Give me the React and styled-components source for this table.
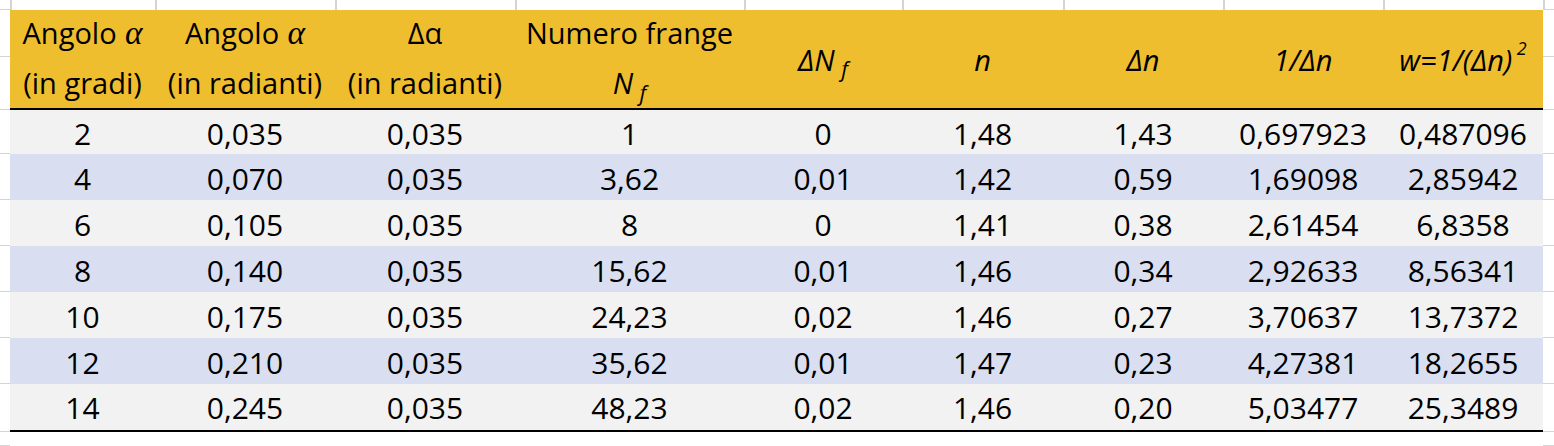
import React from "react";
import styled, { createGlobalStyle, css } from "styled-components";

const GlobalStyle = createGlobalStyle`
  html, body {
    margin: 0;
    padding: 0;
    background: #ffffff;
  }
  body {
    font-family: "Open Sans", "Noto Sans", sans-serif;
    color: #000;
  }
`;

const GRID = "#d4d4d4";
const YELLOW = "#efbe2e";

// every sheet cell sits on an explicit row / column of the sheet grid
const at = css`
  grid-row: ${(p) => p.$row} / span ${(p) => p.$rows || 1};
  grid-column: ${(p) => p.$col} / span ${(p) => p.$cols || 1};
  box-sizing: border-box;
  min-width: 0;
`;

const Sheet = styled.div`
  display: grid;
  grid-template-columns: 10px 145px 180px 180px 229px 158px 161px 160px 160px 160px 1fr;
  grid-template-rows: 10px 47px 53px 44px repeat(5, 46px) 48px 1fr;
  width: 1554px;
  height: 446px;
  overflow: hidden;
  background: #fff;
`;

// empty spreadsheet cells around the table, only gridlines
const EdgeCell = styled.div`
  ${at}
  border-left: ${(p) => (p.$left ? `2px solid ${GRID}` : "none")};
  border-bottom: ${(p) => (p.$under ? `1px solid ${GRID}` : "none")};
`;

const Head = styled.div`
  ${at}
  background: ${YELLOW};
  display: flex;
  align-items: center;
  justify-content: center;
  font-size: 29px;
  font-style: ${(p) => (p.$italic ? "italic" : "normal")};
  white-space: nowrap;
  border-bottom: ${(p) => (p.$last ? "2px solid #000" : "none")};
  padding-bottom: ${(p) => (p.$last ? "0" : "2px")};
`;

const Alpha = styled.span`
  font-family: "Liberation Serif", "DejaVu Serif", serif;
  font-style: italic;
  font-size: 1.15em;
  margin-left: 0.25em;
`;

const Sub = styled.span`
  font-size: 0.74em;
  font-style: italic;
  position: relative;
  top: 0.45em;
  margin-left: 0.3em;
`;

const Sup = styled.span`
  font-size: 0.62em;
  font-style: italic;
  position: relative;
  top: -0.6em;
  margin-left: 0.25em;
`;

const Cell = styled.div`
  ${at}
  background: ${(p) => (p.$alt ? "#d9dff1" : "#f2f2f2")};
  display: flex;
  align-items: center;
  justify-content: center;
  font-size: 30px;
  white-space: nowrap;
  border-bottom: ${(p) => (p.$last ? "2px solid #000" : "none")};
  padding-top: ${(p) => (p.$last ? "0" : "2px")};
`;

const rows = [
  ["2", "0,035", "0,035", "1", "0", "1,48", "1,43", "0,697923", "0,487096"],
  ["4", "0,070", "0,035", "3,62", "0,01", "1,42", "0,59", "1,69098", "2,85942"],
  ["6", "0,105", "0,035", "8", "0", "1,41", "0,38", "2,61454", "6,8358"],
  ["8", "0,140", "0,035", "15,62", "0,01", "1,46", "0,34", "2,92633", "8,56341"],
  ["10", "0,175", "0,035", "24,23", "0,02", "1,46", "0,27", "3,70637", "13,7372"],
  ["12", "0,210", "0,035", "35,62", "0,01", "1,47", "0,23", "4,27381", "18,2655"],
  ["14", "0,245", "0,035", "48,23", "0,02", "1,46", "0,20", "5,03477", "25,3489"],
];

const cols = [2, 3, 4, 5, 6, 7, 8, 9, 10, 11];

export default function App() {
  return (
    <>
      <GlobalStyle />
      <Sheet>
        {/* top strip */}
        <EdgeCell $row={1} $col={1} $under />
        {cols.map((c) => (
          <EdgeCell key={"t" + c} $row={1} $col={c} $left $under={c === 11} />
        ))}

        {/* side gridlines, header rows + data rows */}
        {[2, 3, 4, 5, 6, 7, 8, 9, 10, 11].map((r) => (
          <React.Fragment key={"g" + r}>
            <EdgeCell $row={r} $col={1} $under />
            <EdgeCell $row={r} $col={11} $under />
          </React.Fragment>
        ))}

        {/* header */}
        <Head $row={2} $col={2}>
          Angolo<Alpha>α</Alpha>
        </Head>
        <Head $row={3} $col={2} $last>(in gradi)</Head>
        <Head $row={2} $col={3}>
          Angolo<Alpha>α</Alpha>
        </Head>
        <Head $row={3} $col={3} $last>(in radianti)</Head>
        <Head $row={2} $col={4}>Δα</Head>
        <Head $row={3} $col={4} $last>(in radianti)</Head>
        <Head $row={2} $col={5}>Numero frange</Head>
        <Head $row={3} $col={5} $last $italic>
          N<Sub>f</Sub>
        </Head>
        <Head $row={2} $rows={2} $col={6} $last $italic>
          ΔN<Sub>f</Sub>
        </Head>
        <Head $row={2} $rows={2} $col={7} $last $italic>n</Head>
        <Head $row={2} $rows={2} $col={8} $last $italic>Δn</Head>
        <Head $row={2} $rows={2} $col={9} $last $italic>1/Δn</Head>
        <Head $row={2} $rows={2} $col={10} $last $italic>
          w=1/(Δn)<Sup>2</Sup>
        </Head>

        {/* data */}
        {rows.map((r, i) =>
          r.map((v, j) => (
            <Cell
              key={i + "-" + j}
              $row={i + 4}
              $col={j + 2}
              $alt={i % 2 === 1}
              $last={i === rows.length - 1}
            >
              {v}
            </Cell>
          ))
        )}

        {/* bottom strip */}
        {cols.map((c) => (
          <EdgeCell key={"b" + c} $row={12} $col={c} $left />
        ))}
      </Sheet>
    </>
  );
}
